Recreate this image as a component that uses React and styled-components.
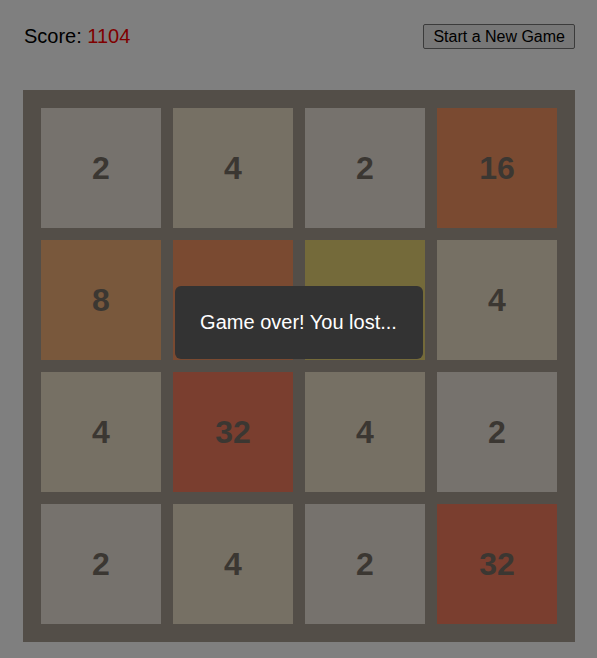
import React from 'react';
import styled, { createGlobalStyle } from 'styled-components';

const GlobalStyle = createGlobalStyle`
  body {
    margin: 0;
    background: #ffffff;
    font-family: "Liberation Sans", Arial, sans-serif;
  }
`

const tileColors = {
  2: '#ece4da',
  4: '#ece0c9',
  8: '#f3b178',
  16: '#f49563',
  32: '#f57c5f',
  128: '#e8d474',
};

const Page = styled.div`
  padding: 24px 22px 16px 23px;
`

const Header = styled.div`
  display: flex;
  align-items: center;
  justify-content: space-between;
  height: 25px;
  margin-bottom: 41px;
`

const Score = styled.div`
  font-size: 20px;
  color: #000;
  padding-left: 1px;
`

const ScoreValue = styled.span`
  color: #ff0000;
`

const NewGameButton = styled.button`
  font-family: "Liberation Sans", Arial, sans-serif;
  font-size: 16px;
  height: 25px;
  padding: 0 9px;
  color: #000;
  background: #efefef;
  border: 1px solid #767676;
  border-radius: 2px;
`

const Board = styled.div`
  display: grid;
  grid-template-columns: repeat(4, 120px);
  grid-auto-rows: 120px;
  gap: 12px;
  padding: 18px;
  width: 516px;
  background: #a69c90;
`

const Tile = styled.div`
  display: flex;
  align-items: center;
  justify-content: center;
  background: ${p => tileColors[p.$value] || '#cdc1b4'};
  color: #776e65;
  font-size: 32px;
  font-weight: bold;
`

const Overlay = styled.div`
  position: fixed;
  inset: 0;
  background: rgba(0, 0, 0, 0.5);
  display: flex;
  align-items: center;
  justify-content: center;
`

const Modal = styled.div`
  width: 248px;
  height: 73px;
  margin-bottom: 13px;
  display: flex;
  align-items: center;
  justify-content: center;
  background: #333333;
  border-radius: 6px;
  color: #fff;
  font-size: 20px;
`

const grid = [
  [2, 4, 2, 16],
  [8, 16, 128, 4],
  [4, 32, 4, 2],
  [2, 4, 2, 32],
];

export default function App() {
  return (
    <>
      <GlobalStyle />
      <Page>
        <Header>
          <Score>Score: <ScoreValue>1104</ScoreValue></Score>
          <NewGameButton>Start a New Game</NewGameButton>
        </Header>
        <Board>
          {grid.flat().map((v, i) => (
            <Tile key={i} $value={v}>{v}</Tile>
          ))}
        </Board>
      </Page>
      <Overlay>
        <Modal>Game over! You lost...</Modal>
      </Overlay>
    </>
  );
}
